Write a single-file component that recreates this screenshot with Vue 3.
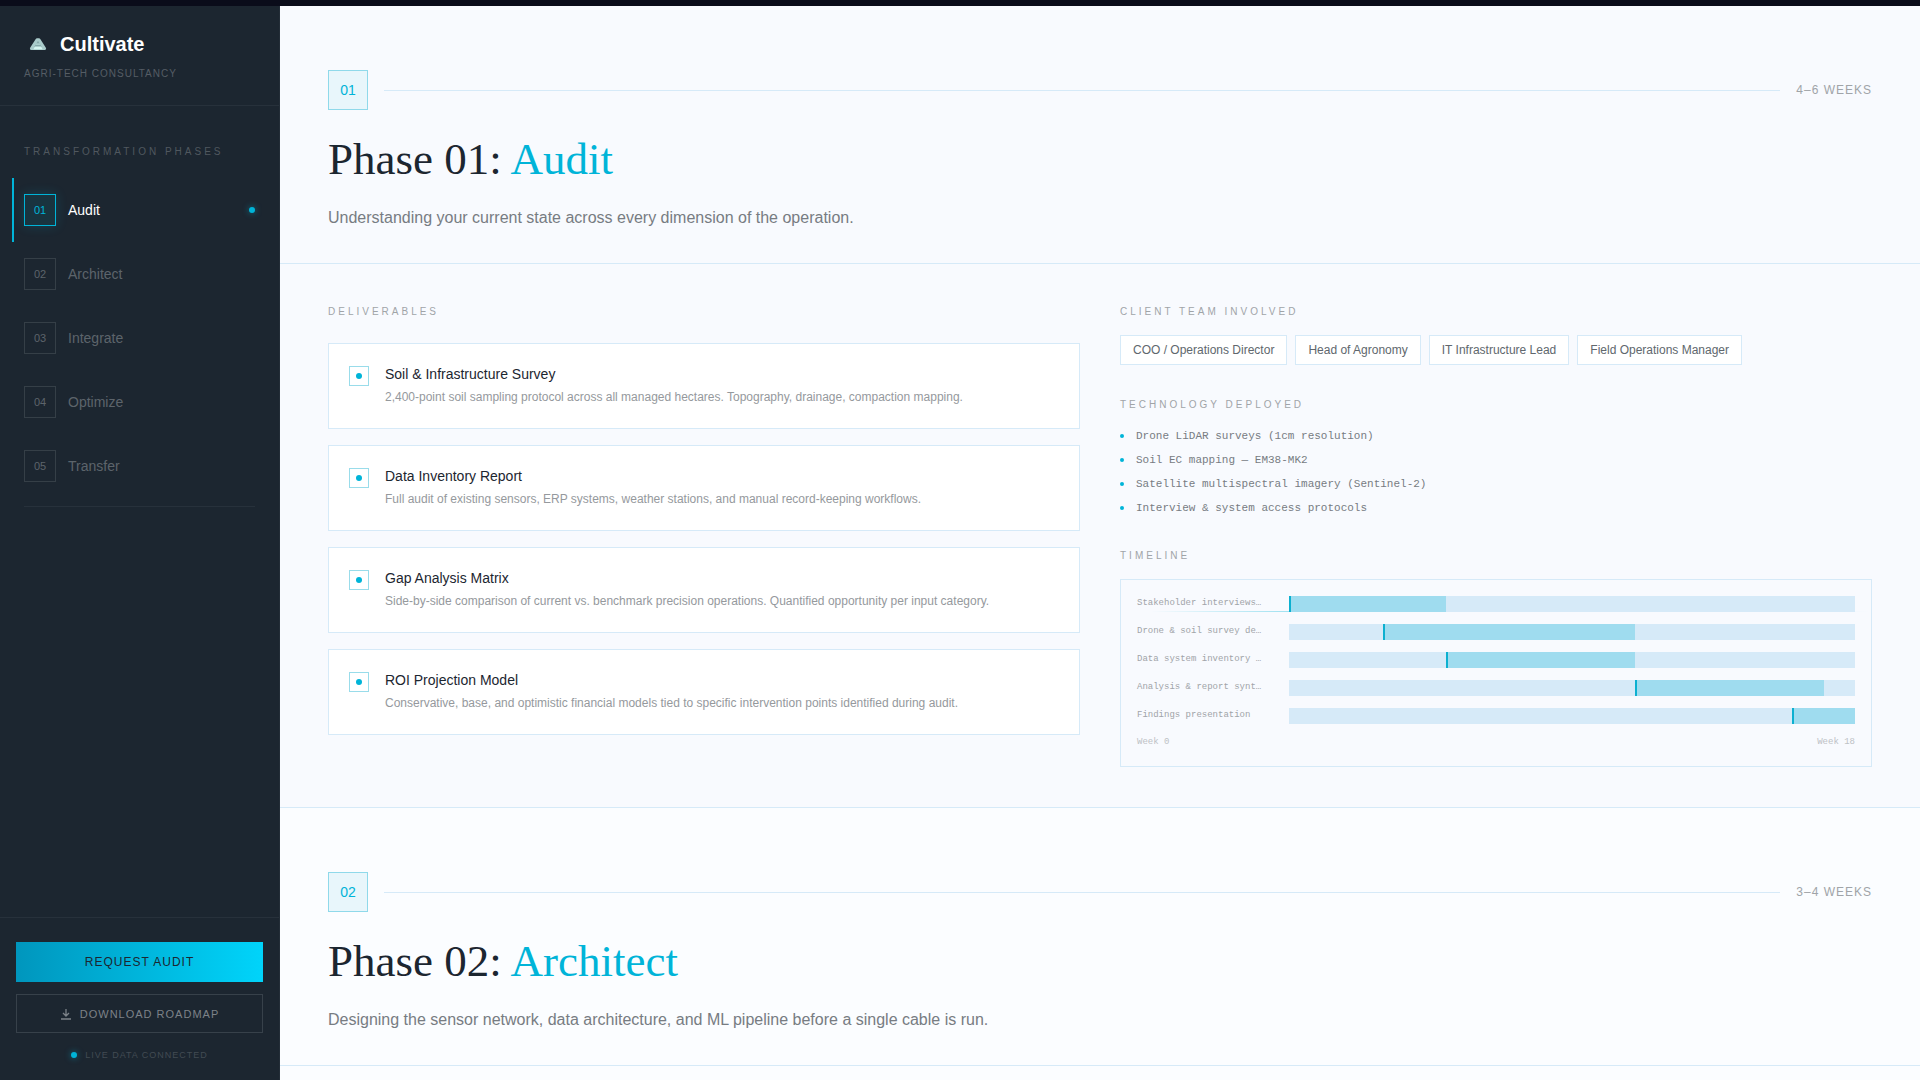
<script setup>
const navItems = [
  { number: '01', name: 'Audit', active: true },
  { number: '02', name: 'Architect' },
  { number: '03', name: 'Integrate' },
  { number: '04', name: 'Optimize' },
  { number: '05', name: 'Transfer' },
]

const phases = [
  {
    number: '01',
    name: 'Audit',
    duration: '4–6 WEEKS',
    summary: 'Understanding your current state across every dimension of the operation.',
    details: {
      deliverables: [
        {
          title: 'Soil & Infrastructure Survey',
          text: '2,400-point soil sampling protocol across all managed hectares. Topography, drainage, compaction mapping.',
        },
        {
          title: 'Data Inventory Report',
          text: 'Full audit of existing sensors, ERP systems, weather stations, and manual record-keeping workflows.',
        },
        {
          title: 'Gap Analysis Matrix',
          text: 'Side-by-side comparison of current vs. benchmark precision operations. Quantified opportunity per input category.',
        },
        {
          title: 'ROI Projection Model',
          text: 'Conservative, base, and optimistic financial models tied to specific intervention points identified during audit.',
        },
      ],
      team: [
        'COO / Operations Director',
        'Head of Agronomy',
        'IT Infrastructure Lead',
        'Field Operations Manager',
      ],
      technology: [
        'Drone LiDAR surveys (1cm resolution)',
        'Soil EC mapping — EM38-MK2',
        'Satellite multispectral imagery (Sentinel-2)',
        'Interview & system access protocols',
      ],
      weeks: 18,
      timeline: [
        { label: 'Stakeholder interviews…', start: 0, end: 5 },
        { label: 'Drone & soil survey de…', start: 3, end: 11 },
        { label: 'Data system inventory …', start: 5, end: 11 },
        { label: 'Analysis & report synt…', start: 11, end: 17 },
        { label: 'Findings presentation', start: 16, end: 18 },
      ],
    },
  },
  {
    number: '02',
    name: 'Architect',
    duration: '3–4 WEEKS',
    summary: 'Designing the sensor network, data architecture, and ML pipeline before a single cable is run.',
  },
]

const barStyle = (task, weeks) => ({
  marginLeft: `${(task.start / weeks) * 100}%`,
  width: `${((task.end - task.start) / weeks) * 100}%`,
})
</script>

<template>
  <div class="page">
    <div class="topbar"></div>
    <div class="layout">
      <aside class="sidebar">
        <div class="brand">
          <div class="brand-row">
            <svg class="logo" viewBox="0 0 28 28" aria-hidden="true">
              <path d="M13 9.8 H15 L20.6 18.6 H7.4 Z" fill="#8fb5b5" stroke="#a9cbca" stroke-width="3" stroke-linejoin="round" />
              <path d="M14 11 L17.5 17 H10.5 Z" fill="#86a9aa" />
              <path d="M12.2 13.6 H15.8 L16.4 14.8 H11.6 Z" fill="#b9dcd9" />
              <path d="M11 16.6 H17 L18.6 19.2 H9.4 Z" fill="#d5f5f0" />
            </svg>
            <span class="brand-name">Cultivate</span>
          </div>
          <div class="brand-tag">AGRI-TECH CONSULTANCY</div>
        </div>

        <nav class="phases" aria-label="Transformation phases">
          <h2 class="nav-heading">TRANSFORMATION PHASES</h2>
          <a
            v-for="item in navItems"
            :key="item.number"
            class="nav-item"
            :class="{ active: item.active }"
            :href="`#phase-${item.number}`"
          >
            <span class="nav-number">{{ item.number }}</span>
            <span class="nav-name">{{ item.name }}</span>
            <span v-if="item.active" class="glow-dot"></span>
          </a>
          <hr class="nav-rule" />
        </nav>

        <div class="actions">
          <button class="btn-primary" type="button">REQUEST AUDIT</button>
          <button class="btn-outline" type="button">
            <svg class="download" viewBox="0 0 12 12" aria-hidden="true">
              <path d="M6 1 V7.5 M3 5 L6 8 L9 5 M1 11 H11" fill="none" stroke="currentColor" stroke-width="1.3" />
            </svg>
            DOWNLOAD ROADMAP
          </button>
          <div class="status"><span class="glow-dot"></span>LIVE DATA CONNECTED</div>
        </div>
      </aside>

      <main class="content">
        <section v-for="phase in phases" :id="`phase-${phase.number}`" :key="phase.number" class="phase">
          <header class="phase-head">
            <div class="phase-meta">
              <span class="phase-number">{{ phase.number }}</span>
              <span class="phase-line"></span>
              <span class="phase-duration">{{ phase.duration }}</span>
            </div>
            <h1 class="phase-title">Phase {{ phase.number }}: <span class="accent">{{ phase.name }}</span></h1>
            <p class="phase-summary">{{ phase.summary }}</p>
          </header>

          <div v-if="phase.details" class="phase-body">
            <div>
              <h2 class="label">DELIVERABLES</h2>
              <ul class="cards">
                <li v-for="item in phase.details.deliverables" :key="item.title" class="card">
                  <span class="card-mark"></span>
                  <div class="card-text">
                    <h3 class="card-title">{{ item.title }}</h3>
                    <p class="card-desc">{{ item.text }}</p>
                  </div>
                </li>
              </ul>
            </div>

            <div class="side">
              <div>
                <h2 class="label">CLIENT TEAM INVOLVED</h2>
                <ul class="chips">
                  <li v-for="role in phase.details.team" :key="role" class="chip">{{ role }}</li>
                </ul>
              </div>
              <div>
                <h2 class="label">TECHNOLOGY DEPLOYED</h2>
                <ul class="tech">
                  <li v-for="tech in phase.details.technology" :key="tech" class="tech-item">{{ tech }}</li>
                </ul>
              </div>
              <div>
                <h2 class="label">TIMELINE</h2>
                <div class="timeline">
                  <div v-for="task in phase.details.timeline" :key="task.label" class="task">
                    <span class="task-label">{{ task.label }}</span>
                    <div class="track">
                      <div class="bar" :style="barStyle(task, phase.details.weeks)"></div>
                    </div>
                  </div>
                  <div class="axis">
                    <span>Week 0</span>
                    <span>Week {{ phase.details.weeks }}</span>
                  </div>
                </div>
              </div>
            </div>
          </div>
        </section>
      </main>
    </div>
  </div>
</template>

<style>
body {
  margin: 0;
  overflow: hidden;
}
</style>

<style scoped>
.page {
  --cyan: #00b4d8;
  --line: #d6eaf8;
  --ink: #1c2630;
  display: flex;
  flex-direction: column;
  height: 100vh;
  overflow: hidden;
  font-family: "Liberation Sans", Arial, sans-serif;
}

.page *,
.page *::before {
  box-sizing: border-box;
}

h1,
h2,
h3,
p,
ul {
  margin: 0;
  padding: 0;
  font-weight: 400;
  list-style: none;
}

.topbar {
  flex: none;
  height: 6px;
  background: #0a0c1a;
}

.layout {
  display: flex;
  flex: 1;
  min-height: 0;
}

/* Sidebar */
.sidebar {
  display: flex;
  flex-direction: column;
  flex: none;
  width: 280px;
  background: var(--ink);
  border-right: 1px solid #232d37;
}

.brand {
  padding: 24px;
  border-bottom: 1px solid #27313b;
}

.brand-row {
  display: flex;
  align-items: center;
  gap: 8px;
}

.logo {
  width: 28px;
  height: 28px;
}

.brand-name {
  font-size: 20px;
  font-weight: 700;
  line-height: 28px;
  color: #fff;
}

.brand-tag {
  margin-top: 9px;
  font-size: 10px;
  line-height: 14px;
  letter-spacing: 1px;
  color: #555d65;
}

.phases {
  flex: 1;
  padding: 39px 24px 0 12px;
}

.nav-heading {
  margin: 0 0 19px 12px;
  font-size: 10px;
  line-height: 14px;
  letter-spacing: 3px;
  color: #50585f;
}

.nav-item {
  display: flex;
  align-items: center;
  gap: 12px;
  height: 64px;
  padding: 0 0 0 10px;
  border-left: 2px solid transparent;
  font-size: 14px;
  color: #5c646b;
  text-decoration: none;
}

.nav-number {
  display: grid;
  place-items: center;
  width: 32px;
  height: 32px;
  border: 1px solid #353f47;
  font-size: 11px;
}

.nav-name {
  flex: 1;
}

.nav-item.active {
  border-left-color: var(--cyan);
  color: #fff;
}

.active .nav-number {
  border-color: var(--cyan);
  background: #19343f;
  box-shadow: 0 0 12px rgba(0, 180, 216, 0.2);
  color: var(--cyan);
}

.glow-dot {
  width: 6px;
  height: 6px;
  border-radius: 50%;
  background: var(--cyan);
  box-shadow: 0 0 6px rgba(0, 180, 216, 0.6);
}

.nav-rule {
  height: 1px;
  margin: 8px 0 0 12px;
  border: 0;
  background: #27313b;
}

.actions {
  padding: 24px 16px 18px;
  border-top: 1px solid #27313b;
}

.btn-primary,
.btn-outline {
  display: flex;
  align-items: center;
  justify-content: center;
  width: 100%;
  padding: 0;
  border-radius: 0;
  font-family: inherit;
  letter-spacing: 1px;
}

.btn-primary {
  height: 40px;
  border: 0;
  background: linear-gradient(90deg, #0096bd, #00d4fa);
  font-size: 12px;
  color: var(--ink);
}

.btn-outline {
  gap: 8px;
  height: 39px;
  margin-top: 12px;
  border: 1px solid #37414a;
  background: transparent;
  font-size: 11px;
  color: #7c8288;
}

.download {
  width: 12px;
  height: 12px;
}

.status {
  display: flex;
  align-items: center;
  justify-content: center;
  gap: 8px;
  margin-top: 15px;
  font-size: 9px;
  line-height: 14px;
  letter-spacing: 1px;
  color: #424b53;
}

/* Main column */
.content {
  display: flex;
  flex-direction: column;
  flex: 1;
  min-width: 0;
  overflow: hidden;
}

.phase {
  flex: none;
  background: #f8fafe;
  border-bottom: 1px solid var(--line);
}

.phase:last-child {
  flex: 1 0 auto;
  border-bottom: 0;
}

.phase:nth-child(even) {
  background: #fbfdff;
}

.phase-head {
  padding: 64px 48px 31px;
  border-bottom: 1px solid var(--line);
}

.phase-meta {
  display: flex;
  align-items: center;
  gap: 16px;
}

.phase-number {
  display: grid;
  place-items: center;
  width: 40px;
  height: 40px;
  border: 1px solid #8fd9ea;
  background: #e8f6fb;
  font-size: 14px;
  color: var(--cyan);
}

.phase-line {
  flex: 1;
  height: 1px;
  background: var(--line);
}

.phase-duration {
  font-size: 12px;
  letter-spacing: 1px;
  color: #a0a4a8;
}

.phase-title {
  margin-top: 24px;
  font-family: "Liberation Serif", "Times New Roman", serif;
  font-size: 45px;
  line-height: 51px;
  color: var(--ink);
}

.accent {
  color: var(--cyan);
}

.phase-summary {
  margin-top: 19px;
  font-size: 16px;
  line-height: 28px;
  color: #777c82;
}

.phase-body {
  display: grid;
  grid-template-columns: 1fr 1fr;
  gap: 40px;
  padding: 40px 48px;
}

.label {
  margin-bottom: 16px;
  font-size: 10px;
  line-height: 15px;
  letter-spacing: 3px;
  color: #a0a4a8;
}

.cards {
  display: flex;
  flex-direction: column;
  gap: 16px;
  padding-top: 8px;
}

.card {
  display: flex;
  gap: 16px;
  padding: 20px 20px 22px;
  border: 1px solid var(--line);
  background: #fff;
}

.card-mark {
  display: grid;
  place-items: center;
  flex: none;
  width: 20px;
  height: 20px;
  margin-top: 2px;
  border: 1px solid #99dcea;
}

.card-mark::before {
  content: "";
  width: 6px;
  height: 6px;
  border-radius: 50%;
  background: var(--cyan);
}

.card-title {
  font-size: 14px;
  line-height: 20px;
  color: var(--ink);
}

.card-desc {
  margin-top: 4px;
  font-size: 12px;
  line-height: 18px;
  color: #95999d;
}

.side {
  display: flex;
  flex-direction: column;
  gap: 32px;
  min-width: 0;
}

.chips {
  display: flex;
  flex-wrap: wrap;
  gap: 8px;
}

.chip {
  padding: 5px 12px;
  border: 1px solid var(--line);
  background: #fff;
  font-size: 12px;
  line-height: 18px;
  color: #60676d;
}

.tech {
  display: flex;
  flex-direction: column;
  gap: 8px;
}

.tech-item {
  display: flex;
  align-items: center;
  gap: 12px;
  font-family: "Liberation Mono", "Courier New", monospace;
  font-size: 11px;
  line-height: 16px;
  color: #777c82;
}

.tech-item::before {
  content: "";
  width: 4px;
  height: 4px;
  border-radius: 50%;
  background: var(--cyan);
}

.timeline {
  position: relative;
  display: flex;
  flex-direction: column;
  gap: 12px;
  padding: 16px 16px 15px;
  border: 1px solid var(--line);
  font-family: "Liberation Mono", "Courier New", monospace;
  font-size: 9px;
  color: #a0a4a8;
}

/* Hairline that crosses the chart behind the tracks */
.timeline::before {
  content: "";
  position: absolute;
  top: 31px;
  left: 0;
  right: 0;
  height: 1px;
  background: linear-gradient(90deg, transparent 4%, rgba(0, 180, 216, 0.5) 30%, transparent);
}

.task {
  display: flex;
  gap: 12px;
}

.task-label {
  flex: none;
  width: 140px;
  line-height: 14px;
}

.track {
  position: relative;
  flex: 1;
  height: 16px;
  background: var(--line);
}

.bar {
  height: 16px;
  border-left: 2px solid #0cb0d0;
  background: #9fdcef;
}

.axis {
  display: flex;
  justify-content: space-between;
  margin-top: -3px;
  line-height: 18px;
  color: #bdc1c5;
}
</style>
